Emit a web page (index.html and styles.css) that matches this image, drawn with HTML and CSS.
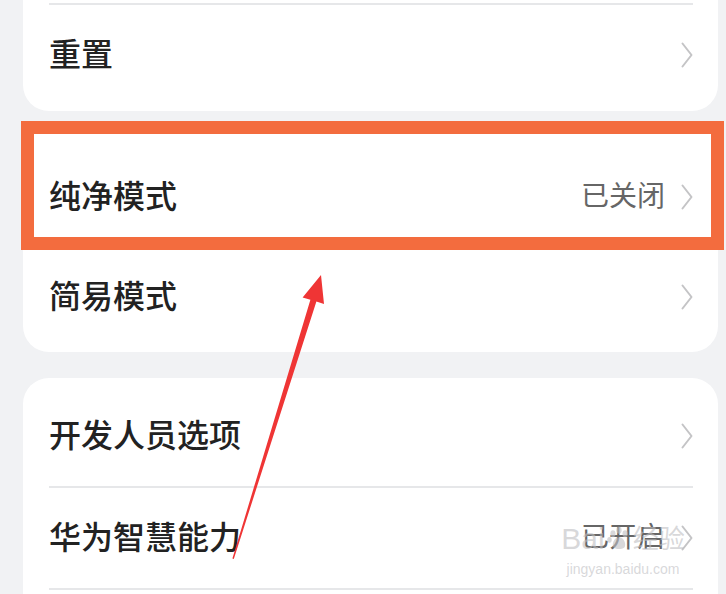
FILE: index.html
```html
<!DOCTYPE html>
<html lang="zh-CN">
<head>
<meta charset="utf-8">
<title>设置</title>
<link rel="stylesheet" href="styles.css">
</head>
<body>
<div class="page">
  <section class="card card-first">
    <div class="row row-top-divider">
      <span class="title">重置</span>
      <span class="right"><svg class="chev" viewBox="0 0 12 26"><path d="M1.5 1.5 L10.5 13 L1.5 24.5"/></svg></span>
    </div>
  </section>

  <section class="card card-second">
    <div class="row">
      <span class="title">纯净模式</span>
      <span class="right"><span class="value">已关闭</span><svg class="chev" viewBox="0 0 12 26"><path d="M1.5 1.5 L10.5 13 L1.5 24.5"/></svg></span>
    </div>
    <div class="row">
      <span class="title">简易模式</span>
      <span class="right"><svg class="chev" viewBox="0 0 12 26"><path d="M1.5 1.5 L10.5 13 L1.5 24.5"/></svg></span>
    </div>
  </section>

  <section class="card card-third">
    <div class="row row-divider">
      <span class="title">开发人员选项</span>
      <span class="right"><svg class="chev" viewBox="0 0 12 26"><path d="M1.5 1.5 L10.5 13 L1.5 24.5"/></svg></span>
    </div>
    <div class="row row-divider">
      <span class="title">华为智慧能力</span>
      <span class="right"><span class="value">已开启</span><svg class="chev" viewBox="0 0 12 26"><path d="M1.5 1.5 L10.5 13 L1.5 24.5"/></svg></span>
    </div>
    <div class="row"></div>
  </section>

  <div class="highlight"></div>

  <svg class="arrow" viewBox="0 0 726 594" width="726" height="594">
    <polygon points="321,275 324,304 316.4,301.6 233.8,559 232.4,558.6 310.4,299.8 302.6,297.4" />
  </svg>

  <div class="watermark">
    <div class="wm-logo"><span>Bai</span><svg class="paw" viewBox="0 0 30 30"><ellipse cx="8" cy="9" rx="3" ry="4"/><ellipse cx="15" cy="5" rx="3" ry="4"/><ellipse cx="22" cy="9" rx="3" ry="4"/><ellipse cx="4" cy="16" rx="2.6" ry="3.4"/><path d="M15 13 C9 13 6 22 9 25 C12 27 18 27 21 25 C24 22 21 13 15 13 Z"/></svg><span class="wm-cn">经验</span></div>
    <div class="wm-url">jingyan.baidu.com</div>
  </div>
</div>
</body>
</html>
```

FILE: styles.css
```css
html, body {
  margin: 0;
  padding: 0;
}

body {
  background: #f1f2f4;
  width: 726px;
  height: 594px;
  overflow: hidden;
  font-family: "Noto Sans CJK SC", "Noto Sans", sans-serif;
}

.page {
  position: relative;
  width: 726px;
  height: 594px;
  overflow: hidden;
}

.card {
  background: #ffffff;
  margin-left: 23px;
  margin-right: 8px;
  border-radius: 26px;
  padding: 0 25px 0 26px;
}

.card-first {
  border-top-left-radius: 0;
  border-top-right-radius: 0;
  padding-top: 3px;
  padding-bottom: 6px;
}

.card-second {
  margin-top: 11px;
  padding-top: 25px;
  padding-bottom: 5px;
}

.card-third {
  margin-top: 26px;
  padding-top: 8px;
  padding-bottom: 6px;
}

.row {
  height: 100px;
  display: flex;
  align-items: center;
  justify-content: space-between;
  box-sizing: border-box;
  padding-bottom: 6px;
}

.row-top-divider {
  border-top: 2px solid #e6e7e9;
  height: 102px;
}

.row-divider {
  border-bottom: 2px solid #e6e7e9;
  height: 102px;
}

.title {
  font-size: 32px;
  font-weight: 500;
  color: #222222;
  letter-spacing: 0;
}

.right {
  display: flex;
  align-items: center;
  gap: 16px;
}

.value {
  font-size: 28px;
  color: #666666;
}

.chev {
  width: 12px;
  height: 26px;
  display: block;
  margin-top: 6px;
}

.chev path {
  fill: none;
  stroke: #c4c4c6;
  stroke-width: 2;
  stroke-linecap: round;
  stroke-linejoin: round;
}

.highlight {
  position: absolute;
  left: 21px;
  top: 121px;
  width: 703px;
  height: 129px;
  box-sizing: border-box;
  border: 13px solid #f36c3e;
}

.arrow {
  position: absolute;
  left: 0;
  top: 0;
}

.arrow polygon {
  fill: #ef3535;
}

.watermark {
  position: absolute;
  left: 548px;
  top: 522px;
  width: 150px;
  color: rgba(190, 190, 194, 0.6);
  font-family: "Liberation Sans", "Noto Sans CJK SC", sans-serif;
  text-align: center;
  white-space: nowrap;
}

.wm-logo {
  font-size: 30px;
  line-height: 34px;
  display: flex;
  align-items: center;
  justify-content: center;
}

.wm-cn {
  font-size: 26px;
}

.paw {
  width: 26px;
  height: 26px;
  fill: rgba(190, 190, 194, 0.6);
  margin: 0 1px;
  flex: none;
}

.wm-url {
  font-size: 14px;
  line-height: 18px;
  margin-top: 4px;
}
```
